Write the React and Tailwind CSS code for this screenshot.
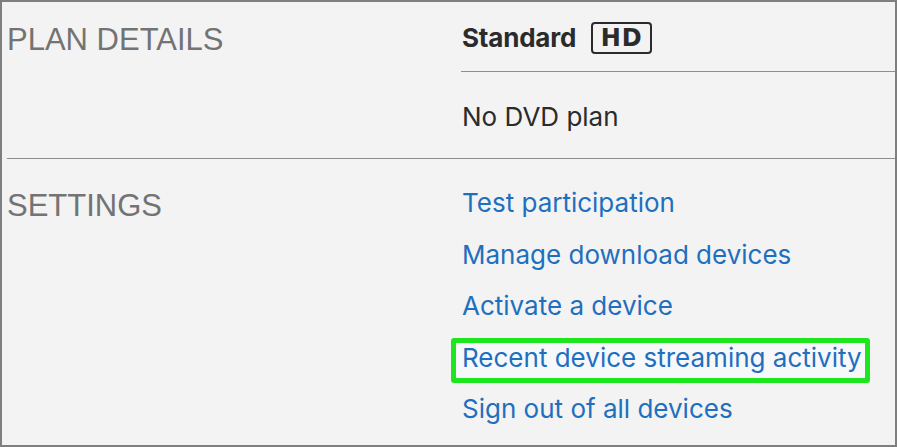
import React from "react";

const links = [
  "Test participation",
  "Manage download devices",
  "Activate a device",
  "Recent device streaming activity",
  "Sign out of all devices",
];

export default function App() {
  return (
    <div className="w-[897px] h-[447px] bg-[#f3f3f3] border-2 border-[#7f7f7f] pl-[5px] overflow-hidden flex flex-col">
      {/* Plan details */}
      <div className="flex">
        <div className="w-[454px] shrink-0 pt-[20px]">
          <div className="text-[31px] leading-[36px] text-[#737373] font-['Liberation_Sans',Arial,sans-serif]">
            PLAN DETAILS
          </div>
        </div>
        <div className="flex-1 font-['Inter',sans-serif]">
          <div className="flex items-center pt-[20px] pb-[17px] pl-[1px] border-b border-[#8f8f8f]">
            <span className="text-[26px] leading-[32px] font-bold text-[#2b2b2b] tracking-[-0.2px]">
              Standard
            </span>
            <span className="ml-[15px] h-[32px] w-[61px] border-2 border-[#2b2b2b] rounded-[4px] flex items-center justify-center text-[24px] font-bold text-[#2b2b2b] leading-none font-['DejaVu_Sans',sans-serif] tracking-[1px]">
              HD
            </span>
          </div>
          <div className="pt-[29px] pb-[25px] pl-[1px] text-[26px] leading-[32px] text-[#2b2b2b]">
            No DVD plan
          </div>
        </div>
      </div>
      {/* Settings */}
      <div className="flex flex-1 border-t border-[#8f8f8f] mr-[-2px]">
        <div className="w-[454px] shrink-0 pt-[29px]">
          <div className="text-[31px] leading-[36px] text-[#737373] font-['Liberation_Sans',Arial,sans-serif]">
            SETTINGS
          </div>
        </div>
        <div className="flex-1 pt-[18px] font-['Inter',sans-serif]">
          {links.map((l, i) => (
            <div key={l} className="relative h-[51.5px] leading-[51px] pl-[1px]">
              {i === 3 && (
                <div className="absolute left-[-10px] top-[6px] w-[419px] h-[45px] border-[5px] border-[#1ee61e] rounded-[3px] bg-[#f7f8fa]" />
              )}
              <span className="relative text-[26px] text-[#1f6fbf]">{l}</span>
            </div>
          ))}
        </div>
      </div>
    </div>
  );
}
